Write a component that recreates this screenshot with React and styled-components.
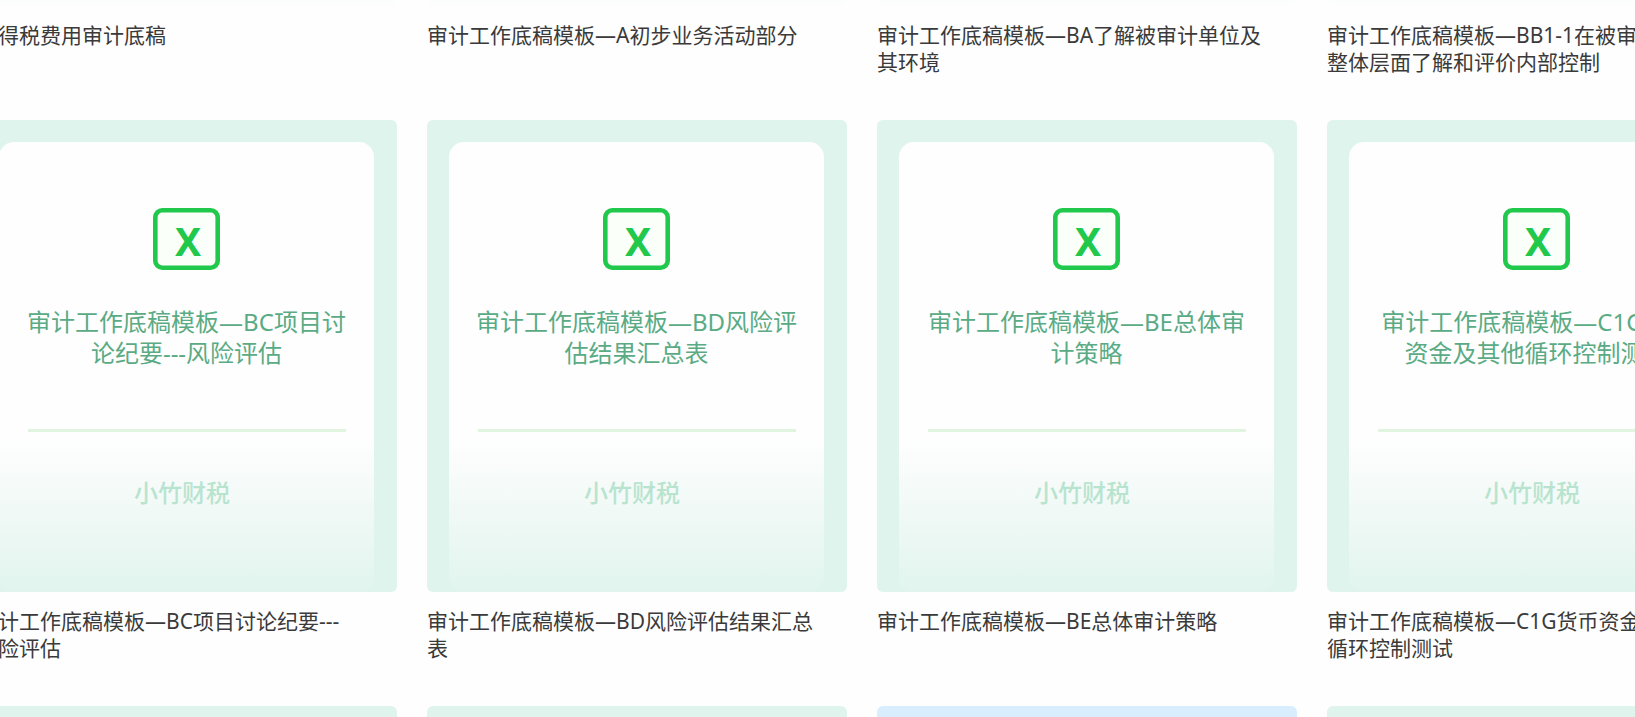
import React from "react";
import styled, { createGlobalStyle } from "styled-components";

const GlobalStyle = createGlobalStyle`
  * { box-sizing: border-box; }
  body {
    margin: 0;
    background: #fefefe;
    font-family: "Noto Sans", "Noto Sans CJK SC", sans-serif;
  }
`;

const tones = {
  green: "#dff4ec",
  blue: "#d8eeff",
  faint: "#fcfefe",
};

const Page = styled.main`
  height: 100vh;
  overflow: hidden;
`;

const Gallery = styled.div`
  display: flex;
  flex-direction: column;
  margin-left: -23px;
`;

const Row = styled.section`
  display: grid;
  grid-template-columns: repeat(4, minmax(420px, 1fr));
  column-gap: 30px;
`;

const Item = styled.article`
  display: flex;
  flex-direction: column;
`;

const Cover = styled.div`
  height: ${({ $short }) => ($short ? "6px" : "472px")};
  padding: ${({ $short }) => ($short ? "0" : "22px 23px 0 22px")};
  border-radius: ${({ $short }) => ($short ? "0 0 6px 6px" : "6px")};
  background: ${({ $tone }) => tones[$tone]};
`;

const Sheet = styled.div`
  display: flex;
  flex-direction: column;
  align-items: center;
  height: 450px;
  padding-top: 66px;
  border-radius: 15px;
  background: linear-gradient(#fefefe 66%, #eef8f5 85%, #e1f5ee 100%);
`;

const FileIcon = styled.svg`
  display: block;
  flex: none;
  width: 67px;
  height: 62px;
`;

const IconLetter = styled.text`
  fill: #20c84c;
  font-family: "Noto Sans", sans-serif;
  font-size: 39px;
  font-weight: 700;
  text-anchor: middle;
`;

const Title = styled.h2`
  height: 62px;
  margin: 36px 0 0;
  color: #5aab84;
  font-size: 24px;
  font-weight: 400;
  line-height: 31px;
  text-align: center;
  white-space: pre;
`;

const Divider = styled.hr`
  width: 318px;
  height: 3px;
  margin: 61px 0 0;
  border: 0;
  background: #e0f4e0;
`;

const Brand = styled.p`
  margin: 45px 9px 0 0;
  color: #b8e4cf;
  font-size: 24px;
  font-weight: 500;
  line-height: 31px;
`;

const Caption = styled.p`
  min-height: 114px;
  margin: 0;
  padding-top: 16px;
  color: #3a3a3a;
  font-size: 21px;
  font-weight: 400;
  line-height: 27px;
  white-space: pre;
`;

const rows = [
  {
    short: true,
    items: [
      { tone: "faint", caption: "所得税费用审计底稿" },
      { tone: "faint", caption: "审计工作底稿模板—A初步业务活动部分" },
      { tone: "faint", caption: "审计工作底稿模板—BA了解被审计单位及\n其环境" },
      { tone: "faint", caption: "审计工作底稿模板—BB1-1在被审计单位\n整体层面了解和评价内部控制" },
    ],
  },
  {
    items: [
      {
        tone: "green",
        title: "审计工作底稿模板—BC项目讨\n论纪要---风险评估",
        caption: "审计工作底稿模板—BC项目讨论纪要---\n风险评估",
      },
      {
        tone: "green",
        title: "审计工作底稿模板—BD风险评\n估结果汇总表",
        caption: "审计工作底稿模板—BD风险评估结果汇总\n表",
      },
      {
        tone: "green",
        title: "审计工作底稿模板—BE总体审\n计策略",
        caption: "审计工作底稿模板—BE总体审计策略",
      },
      {
        tone: "green",
        title: "审计工作底稿模板—C1G货币\n资金及其他循环控制测试",
        caption: "审计工作底稿模板—C1G货币资金及其他\n循环控制测试",
      },
    ],
  },
  {
    items: [{ tone: "green" }, { tone: "green" }, { tone: "blue" }, { tone: "green" }],
  },
];

function SpreadsheetIcon() {
  return (
    <FileIcon viewBox="0 0 67 62" role="img" aria-label="Excel">
      <rect x="2.3" y="2.3" width="62.4" height="57.4" rx="7" fill="#fbfffa" stroke="#20c84c" strokeWidth="4.6" />
      <IconLetter x="35" y="48">X</IconLetter>
    </FileIcon>
  );
}

function DocumentItem({ item, short }) {
  return (
    <Item>
      <Cover $tone={item.tone} $short={short}>
        {item.title && (
          <Sheet>
            <SpreadsheetIcon />
            <Title>{item.title}</Title>
            <Divider />
            <Brand>小竹财税</Brand>
          </Sheet>
        )}
      </Cover>
      {item.caption && <Caption>{item.caption}</Caption>}
    </Item>
  );
}

export default function App() {
  return (
    <Page>
      <GlobalStyle />
      <Gallery>
        {rows.map((row, r) => (
          <Row key={r}>
            {row.items.map((item, i) => (
              <DocumentItem key={i} item={item} short={row.short} />
            ))}
          </Row>
        ))}
      </Gallery>
    </Page>
  );
}
